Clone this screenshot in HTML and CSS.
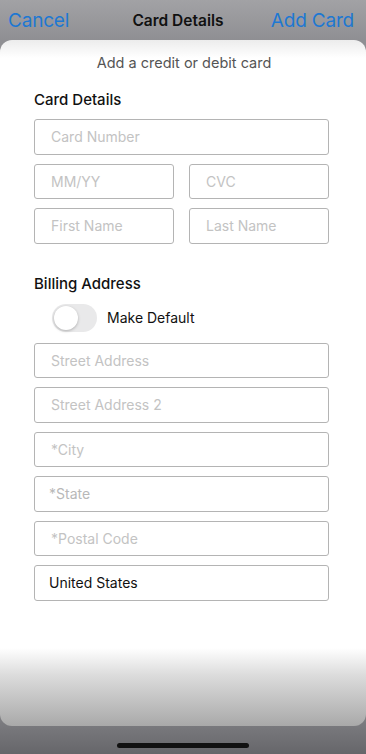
FILE: index.html
```html
<!DOCTYPE html>
<html lang="en">
<head>
    <meta charset="UTF-8">
    <meta name="viewport" content="width=device-width, initial-scale=1.0">
    <title>Card Details</title>
    <link rel="stylesheet" href="styles.css">
</head>
<body>
   <header class="navbar">
    <a href="#" class="navLink">Cancel</a>
    <div class="navTitle">Card Details</div>
    <a href="#" class="navLink">Add Card</a>
   </header>

   <section class="sheet">
    <div class="subtitle">Add a credit or debit card</div>
    <form class="form">
        <div class="sectionTitle">Card Details</div>
        <div class="field"><input type="text" placeholder="Card Number"></div>
        <div class="fieldRow">
            <div class="field"><input type="text" placeholder="MM/YY"></div>
            <div class="field"><input type="text" placeholder="CVC"></div>
        </div>
        <div class="fieldRow">
            <div class="field"><input type="text" placeholder="First Name"></div>
            <div class="field"><input type="text" placeholder="Last Name"></div>
        </div>

        <div class="sectionTitle billing">Billing Address</div>
        <label class="toggleRow">
            <span class="toggle"><span class="knob"></span></span>
            Make Default
        </label>
        <div class="field"><input type="text" placeholder="Street Address"></div>
        <div class="field"><input type="text" placeholder="Street Address 2"></div>
        <div class="field"><input type="text" placeholder="*City"></div>
        <div class="field picker"><div class="pickerText">*State</div></div>
        <div class="field"><input type="text" placeholder="*Postal Code"></div>
        <div class="field picker"><div class="pickerText filled">United States</div></div>
    </form>
   </section>

   <footer class="bottom">
    <div class="homeBar"></div>
   </footer>
</body>
</html>
```

FILE: styles.css
```css
body{
    margin: 0px;
    height: 754px;
    font-family: Inter, 'Liberation Sans', Arial, sans-serif;
    background: linear-gradient(#a2a2a5, #8f8f93 40px, #8a8a8e 700px, #66666a);
    display: flex;
    flex-direction: column;
}
a{
    text-decoration: none;
}
.navbar{
    height: 40px;
    display: flex;
    align-items: center;
    justify-content: space-between;
    padding: 0px 12px 0px 8px;
}
.navLink{
    color: #1e78d2;
    font-size: 19px;
    letter-spacing: -0.2px;
}
.navTitle{
    font-size: 15.5px;
    font-weight: 600;
    color: #111;
    margin-left: 16px;
}
.sheet{
    height: 686px;
    border-radius: 12px;
    background: linear-gradient(#ececec, #ffffff 18px, #ffffff 608px, #dcdcdc 635px, #a9a9a9 686px);
}
.subtitle{
    text-align: center;
    font-size: 14.5px;
    color: #555;
    padding-top: 14px;
    padding-left: 2px;
}
.form{
    padding: 19px 37px 0px 34px;
    display: flex;
    flex-direction: column;
    gap: 9px;
}
.sectionTitle{
    font-size: 15px;
    font-weight: 500;
    color: #111;
    margin-bottom: 1px;
}
.billing{
    margin-top: 21px;
    margin-bottom: 2px;
}
.fieldRow{
    display: flex;
    gap: 15px;
}
.fieldRow .field{
    flex: 1;
}
.field{
    height: 35.5px;
    box-sizing: border-box;
    border: 1px solid #b4b4b4;
    border-radius: 3px;
    display: flex;
    align-items: center;
}
.field input{
    border: none;
    outline: none;
    background: transparent;
    width: 100%;
    font-family: inherit;
    font-size: 14px;
    padding: 0px 0px 0px 16px;
    color: #111;
}
.field input::placeholder{
    color: #c3c3c3;
}
.pickerText{
    font-size: 14px;
    padding-left: 14px;
    color: #b8b8b8;
}
.pickerText.filled{
    color: #111;
}
.toggleRow{
    display: flex;
    align-items: center;
    gap: 10px;
    padding-left: 18px;
    margin-bottom: 2px;
    font-size: 14px;
    color: #111;
}
.toggle{
    width: 45px;
    height: 28px;
    border-radius: 14px;
    background: #e9e9ea;
    display: flex;
    align-items: center;
    padding: 0px 2px;
    box-sizing: border-box;
}
.knob{
    width: 24px;
    height: 24px;
    border-radius: 50%;
    background: white;
    box-shadow: 0px 1px 3px rgba(0,0,0,0.25);
}
.bottom{
    flex: 1;
    display: flex;
    align-items: flex-end;
    justify-content: center;
}
.homeBar{
    width: 132px;
    height: 5px;
    border-radius: 3px;
    background: #111;
    margin-bottom: 6px;
}
```
